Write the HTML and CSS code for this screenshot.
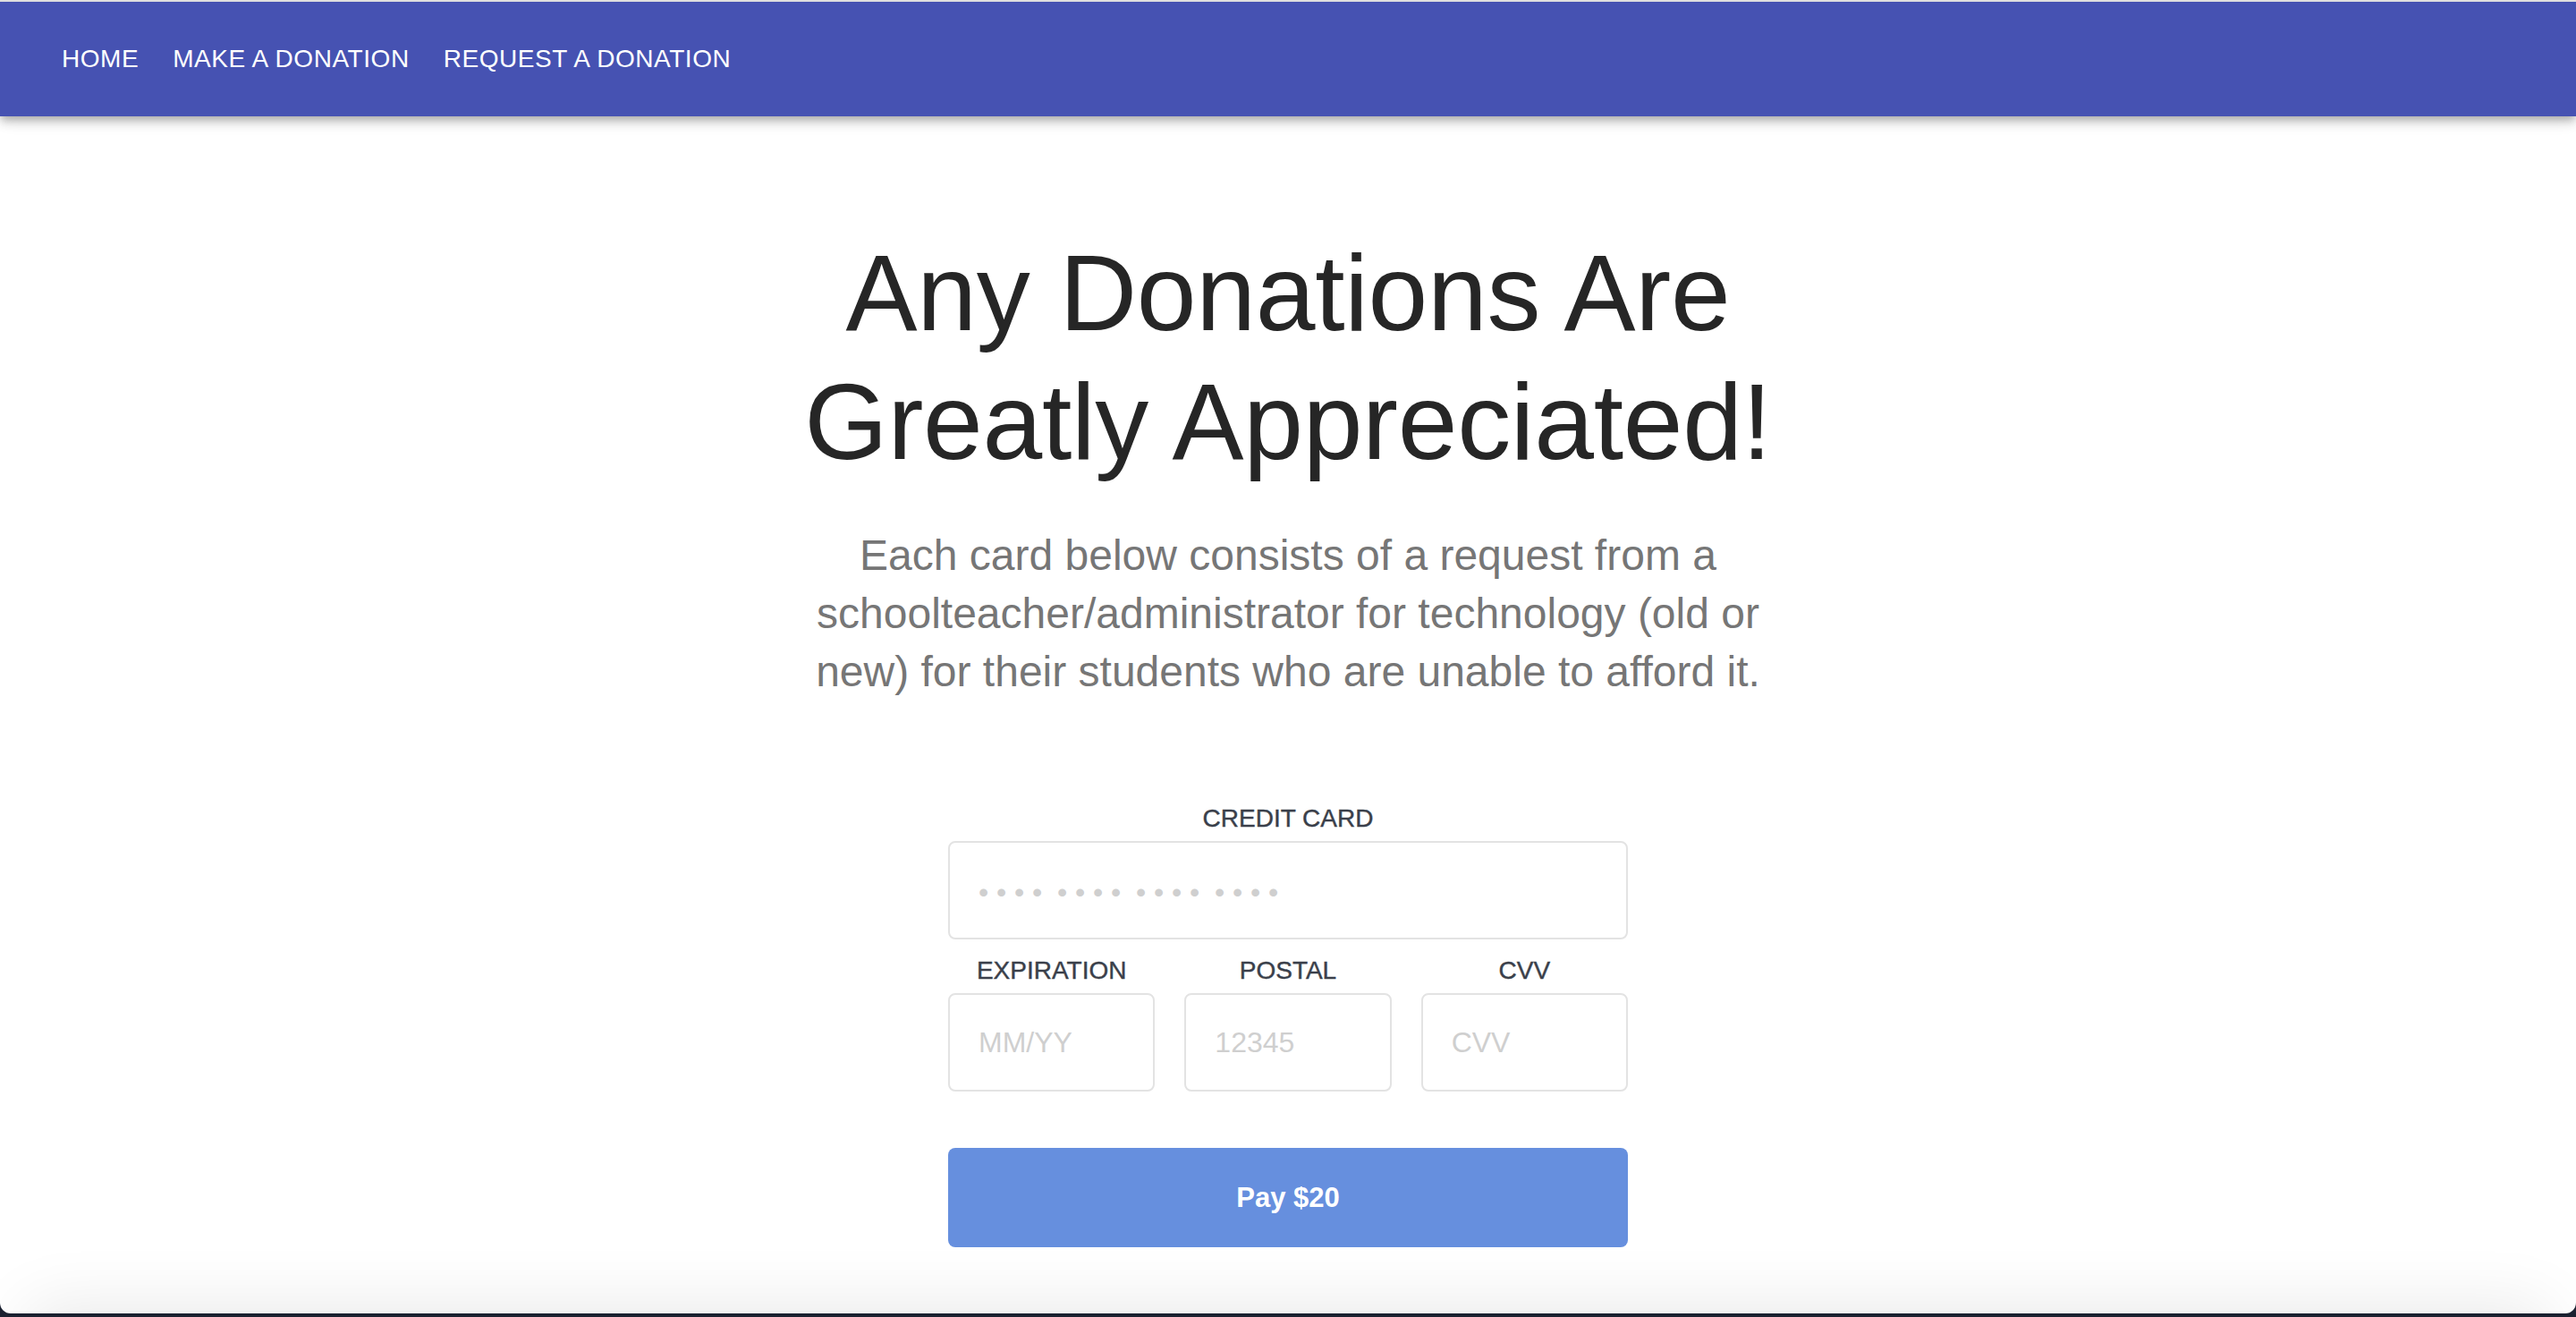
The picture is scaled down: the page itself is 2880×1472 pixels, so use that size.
FILE: index.html
```html
<!DOCTYPE html>
<html lang="en">
<head>
<meta charset="utf-8">
<title>Make a Donation</title>
<link rel="stylesheet" href="styles.css">
</head>
<body>
<div class="window">
  <header class="navbar">
    <a class="nav-link" href="#">Home</a>
    <a class="nav-link" href="#">Make a Donation</a>
    <a class="nav-link" href="#">Request a Donation</a>
  </header>

  <main class="content">
    <section class="hero">
      <h1 class="hero-title">Any Donations Are Greatly Appreciated!</h1>
      <p class="hero-text">Each card below consists of a request from a schoolteacher/administrator for technology (old or new) for their students who are unable to afford it.</p>
    </section>

    <form class="pay-form">
      <div class="field">
        <label class="field-label">Credit Card</label>
        <div class="field-box"><span class="placeholder dots">•••• •••• •••• ••••</span></div>
      </div>
      <div class="field-row">
        <div class="field">
          <label class="field-label">Expiration</label>
          <div class="field-box"><span class="placeholder">MM/YY</span></div>
        </div>
        <div class="field">
          <label class="field-label">Postal</label>
          <div class="field-box"><span class="placeholder">12345</span></div>
        </div>
        <div class="field">
          <label class="field-label">CVV</label>
          <div class="field-box"><span class="placeholder">CVV</span></div>
        </div>
      </div>
      <button class="pay-button" type="button">Pay $20</button>
    </form>
  </main>

  <div class="fold-shadow"><div class="fold-card"></div></div>
</div>
</body>
</html>
```

FILE: styles.css
```css
* { box-sizing: border-box; }

html, body {
  margin: 0;
  padding: 0;
  height: 100%;
}

body {
  background: #1b2130;
  overflow: hidden;
  font-family: "Liberation Sans", Arial, sans-serif;
}

.window {
  position: relative;
  height: calc(100vh - 4px);
  background: #ffffff;
  border-top: 2px solid #dfdfdf;
  border-radius: 0 0 12px 12px;
  overflow: hidden;
}

.navbar {
  position: relative;
  z-index: 2;
  height: 128px;
  background: #4652b2;
  display: flex;
  align-items: center;
  gap: 38px;
  padding-left: 69px;
  box-shadow: 0 4px 8px -2px rgba(0,0,0,0.22), 0 8px 10px rgba(0,0,0,0.12), 0 2px 20px rgba(0,0,0,0.10);
}

.nav-link {
  color: #ffffff;
  text-decoration: none;
  text-transform: uppercase;
  font-size: 28px;
  line-height: 32px;
  letter-spacing: 0.55px;
}

.content {
  text-align: center;
}

.hero {
  width: 1160px;
  margin: 0 auto;
  padding-top: 125px;
}

.hero-title {
  margin: 0;
  font-size: 120px;
  line-height: 144px;
  font-weight: 400;
  letter-spacing: -0.3px;
  color: #262626;
}

.hero-text {
  margin: 45px 0 0;
  font-size: 48px;
  line-height: 65px;
  color: #767676;
}

.pay-form {
  width: 760px;
  margin: 116px auto 0;
}

.field-label {
  display: block;
  font-size: 28px;
  line-height: 32px;
  text-transform: uppercase;
  color: #3a3f4a;
  -webkit-text-stroke: 0.4px #3a3f4a;
  margin-bottom: 9px;
}

.field-box {
  height: 110px;
  border: 2px solid #e3e3e3;
  border-radius: 8px;
  display: flex;
  align-items: center;
  padding-left: 32px;
  text-align: left;
}

.placeholder {
  font-size: 32px;
  color: #cfcfcf;
}

.dots {
  letter-spacing: 8.8px;
  word-spacing: -9.7px;
  position: relative;
  top: 2px;
}

.field-row {
  display: grid;
  grid-template-columns: repeat(3, 1fr);
  gap: 33px;
  margin-top: 19px;
}

.pay-button {
  display: block;
  width: 100%;
  height: 111px;
  margin-top: 63px;
  border: none;
  border-radius: 8px;
  background: #668fde;
  color: #ffffff;
  font-family: "Liberation Sans", Arial, sans-serif;
  font-weight: 700;
  font-size: 31px;
}

.fold-shadow {
  position: absolute;
  left: 0;
  right: 0;
  bottom: 0;
  height: 100px;
  overflow: hidden;
  pointer-events: none;
}

.fold-card {
  position: absolute;
  left: 40px;
  right: 40px;
  top: 100%;
  height: 200px;
  background: #fff;
  box-shadow: 0 0 70px 8px rgba(0,0,0,0.09);
}
```
